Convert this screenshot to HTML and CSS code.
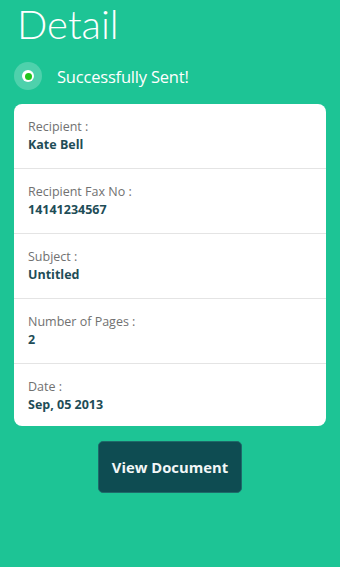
FILE: index.html
```html
<!DOCTYPE html>
<html>
<head>
<meta charset="utf-8">
<link rel="stylesheet" href="styles.css">
</head>
<body>
<div class="page">
  <h1 class="title">Detail</h1>
  <div class="status">
    <span class="status-icon"><span class="ring"><span class="dot"></span></span></span>
    <span class="status-text">Successfully Sent!</span>
  </div>
  <div class="card">
    <div class="row"><div class="label">Recipient :</div><div class="value">Kate Bell</div></div>
    <div class="row"><div class="label">Recipient Fax No :</div><div class="value">14141234567</div></div>
    <div class="row"><div class="label">Subject :</div><div class="value">Untitled</div></div>
    <div class="row"><div class="label">Number of Pages :</div><div class="value">2</div></div>
    <div class="row"><div class="label">Date :</div><div class="value">Sep, 05 2013</div></div>
  </div>
  <div class="actions">
    <button class="btn">View Document</button>
  </div>
</div>
</body>
</html>
```
FILE: styles.css
```css
html, body {
  margin: 0;
  padding: 0;
  background: #1dc495;
  font-family: "Open Sans", "Noto Sans", sans-serif;
}
.page {
  width: 340px;
  height: 567px;
  box-sizing: border-box;
  padding: 0 14px;
  overflow: hidden;
}
.title {
  margin: 0;
  padding: 0 0 0 3px;
  font-family: Lato, "Open Sans", sans-serif;
  font-size: 40px;
  font-weight: 300;
  color: #ffffff;
  line-height: 48px;
  height: 48px;
}
.status {
  display: flex;
  align-items: center;
  height: 56px;
}
.status-icon {
  width: 28px;
  height: 28px;
  border-radius: 50%;
  background: rgba(255,255,255,0.22);
  display: flex;
  align-items: center;
  justify-content: center;
}
.ring {
  width: 12px;
  height: 12px;
  border-radius: 50%;
  background: #ffffff;
  display: flex;
  align-items: center;
  justify-content: center;
}
.dot {
  width: 7px;
  height: 7px;
  border-radius: 50%;
  background: #22c41c;
}
.status-text {
  margin-left: 15px;
  font-size: 16.5px;
  color: #ffffff;
  letter-spacing: -0.2px;
}
.card {
  background: #ffffff;
  border-radius: 8px;
  overflow: hidden;
}
.row {
  padding: 14px;
  border-bottom: 1px solid #e4e4e4;
  height: 36px;
}
.row:last-child {
  border-bottom: none;
  height: 34px;
}
.label {
  font-size: 12.5px;
  line-height: 18px;
  color: #717171;
}
.value {
  font-size: 12.5px;
  line-height: 18px;
  font-weight: 700;
  color: #1e4d57;
}
.actions {
  display: flex;
  justify-content: center;
  margin-top: 15px;
}
.btn {
  width: 144px;
  height: 52px;
  background: #0e4c52;
  border: 1px solid #1e6a6a;
  border-radius: 5px;
  color: #f2f7f7;
  font-family: "Open Sans", "Noto Sans", sans-serif;
  font-weight: 700;
  font-size: 14.8px;
  padding: 0;
}
```
